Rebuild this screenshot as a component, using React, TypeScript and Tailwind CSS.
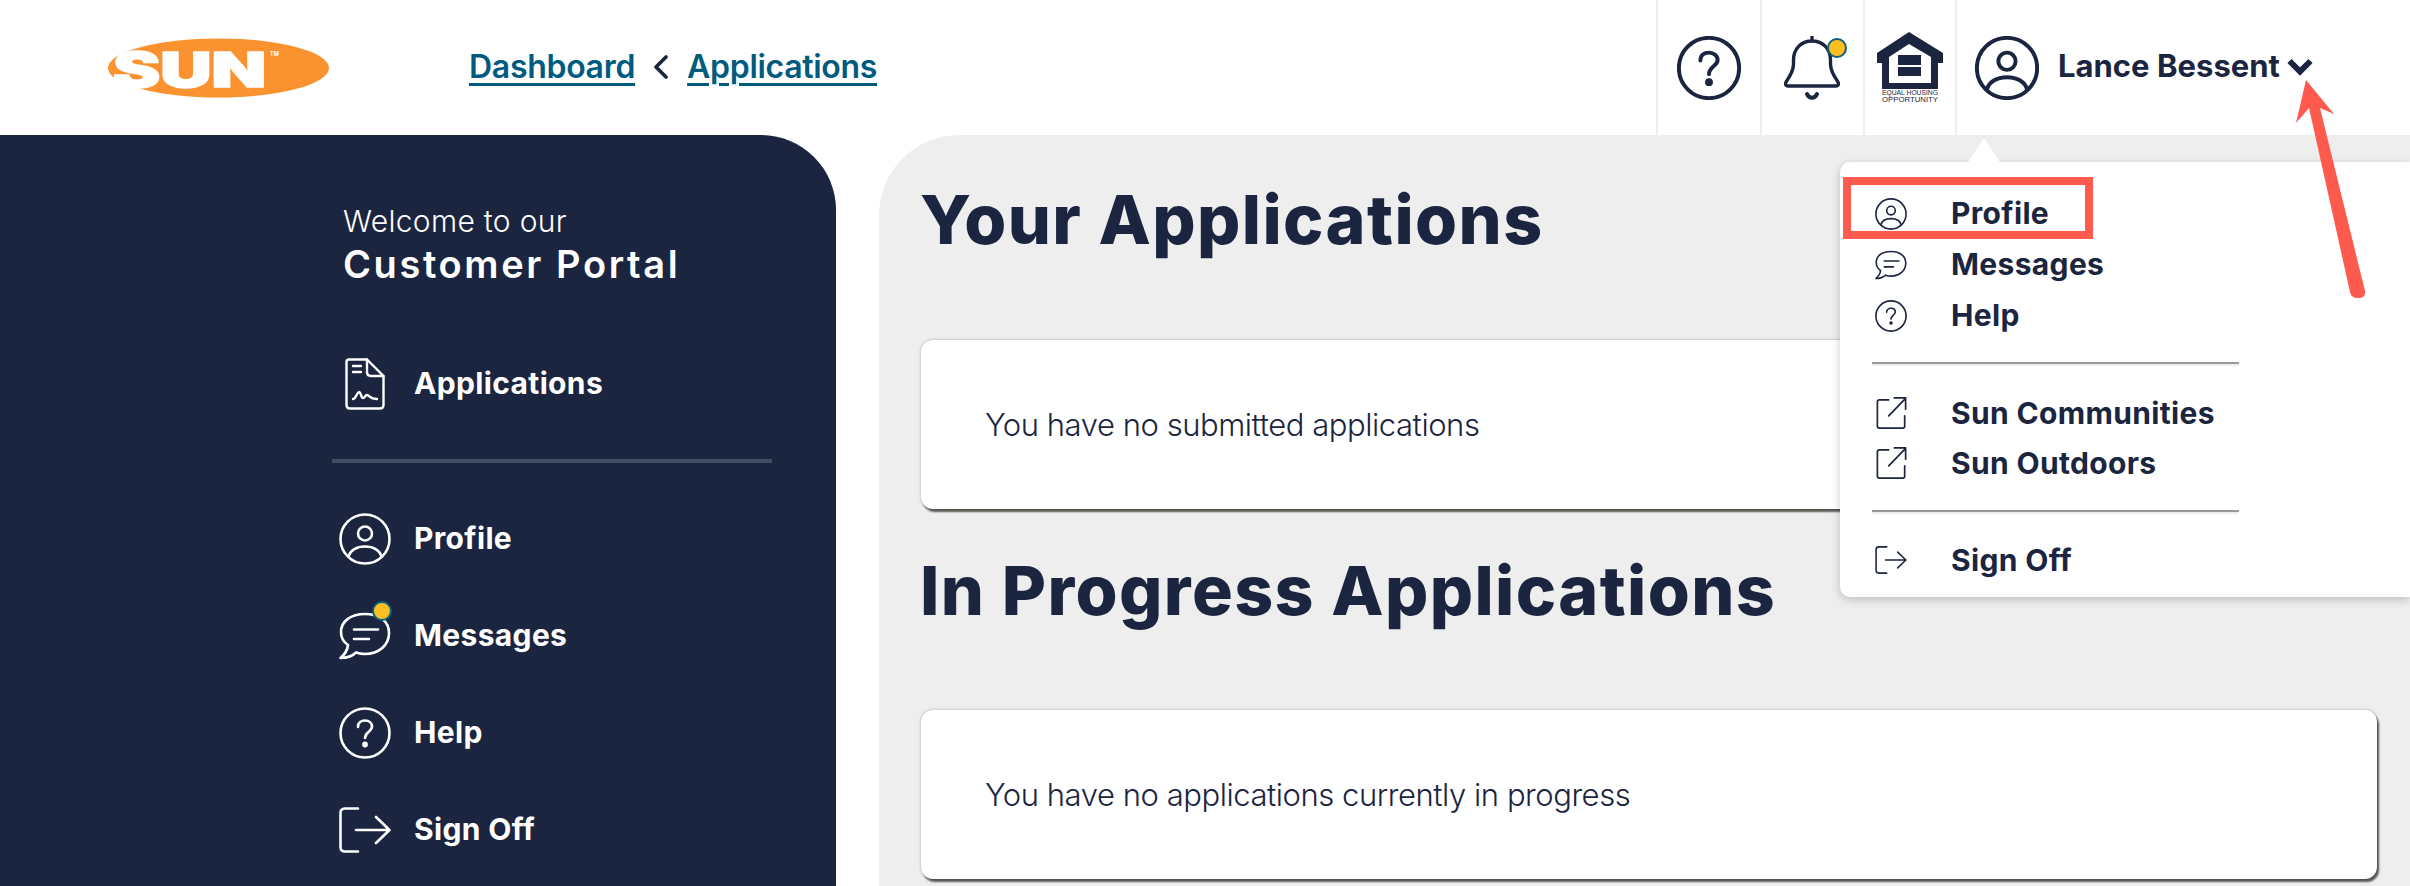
const navy = "#1b2540";

const UserIcon = ({ className = "" }: { className?: string }) => (
  <svg viewBox="0 0 52 52" fill="none" stroke="currentColor" strokeWidth="2.6" className={className}>
    <circle cx="26" cy="26" r="24.5" />
    <circle cx="26" cy="20.5" r="7" />
    <path d="M9.5 44 C11 37 18 33.5 26 33.5 S41 37 42.5 44" />
  </svg>
);

const HelpIcon = ({ className = "" }: { className?: string }) => (
  <svg viewBox="0 0 52 52" fill="none" stroke="currentColor" strokeWidth="2.6" strokeLinecap="round" className={className}>
    <circle cx="26" cy="26" r="24.5" />
    <path d="M19 20 C19 15.5 22 13.5 26 13.5 C30 13.5 33 16 33 19.5 C33 24.5 26 25 26 31" />
    <circle cx="26" cy="37.5" r="1.6" fill="currentColor" />
  </svg>
);

const ChatIcon = ({ className = "" }: { className?: string }) => (
  <svg viewBox="0 0 52 48" fill="none" stroke="currentColor" strokeWidth="2.6" strokeLinecap="round" strokeLinejoin="round" className={className}>
    <path d="M26 2 C12 2 2 9 2 20 C2 26 4.5 30 9 33 C8.5 38 5 43 1.5 46 C8 46 14 43.5 17 40.5 C20 41.5 23 42 26 42 C40 42 50 33 50 21 C50 9 40 2 26 2 Z" />
    <path d="M15 17.5 H39 M15 27 H30" />
  </svg>
);

const ExternalIcon = ({ className = "" }: { className?: string }) => (
  <svg viewBox="0 0 32 34" fill="none" stroke="currentColor" strokeWidth="1.8" strokeLinecap="round" strokeLinejoin="round" className={className}>
    <path d="M13 3 H3 C1.8 3 1 3.8 1 5 V31 C1 32.2 1.8 33 3 33 H28 C29.2 33 30 32.2 30 31 V20" />
    <path d="M13 20 L31 1.5 M19 1 H31 V13" />
  </svg>
);

const SignOffIcon = ({ className = "" }: { className?: string }) => (
  <svg viewBox="0 0 52 46" fill="none" stroke="currentColor" strokeWidth="2.6" strokeLinecap="round" strokeLinejoin="round" className={className}>
    <path d="M19 1.5 H6 C3 1.5 1.5 3 1.5 6 V40 C1.5 43 3 44.5 6 44.5 H19" />
    <path d="M17 23 H50 M37 10 L50.5 23 L37 36" />
  </svg>
);

const DocIcon = () => (
  <svg viewBox="0 0 40 52" fill="none" stroke="currentColor" strokeWidth="2.4" strokeLinecap="round" strokeLinejoin="round" className="h-[52px] w-[40px] text-white">
    <path d="M4 1.5 H22 L38.5 18 V47 C38.5 49.5 37 50.5 35 50.5 H5 C3 50.5 1.5 49.5 1.5 47 V4 C1.5 2.5 2.5 1.5 4 1.5 Z" />
    <path d="M22 1.5 V14 C22 16.5 23.5 18 26 18 H38.5" />
    <path d="M8 8 H16 M8 14 H16" />
    <path d="M8 41 C11 41 12 34 14 34 C16 34 16 40 18 40 C20 40 20 37 22 37 C24 37 25 41 32 41" />
  </svg>
);

const Dot = ({ className }: { className: string }) => (
  <span className={`absolute h-[20px] w-[20px] rounded-full border-2 border-[#0b5f80] bg-[#fdbf22] ${className}`} />
);

const SunLogo = () => (
  <svg viewBox="0 0 221 60" className="h-[60px] w-[221px]">
    <ellipse cx="110.5" cy="30" rx="110.5" ry="29.5" fill="#fb9230" />
    <text x="5" y="49" fontSize="48" fontWeight="900" fontFamily="Inter, sans-serif" fill="#fff" stroke="#fff" strokeWidth="1.5" textLength="153" lengthAdjust="spacingAndGlyphs">SUN</text>
    <text x="162" y="18" fontSize="5.5" fontWeight="700" fontFamily="Inter, sans-serif" fill="#fff">TM</text>
  </svg>
);

const HousingLogo = () => (
  <svg viewBox="0 0 66 71" className="h-[71px] w-[66px]">
    <path d="M32 0 L66 21 V31 H61 V57 H5 V31 H0 V21 Z" fill={navy} />
    <path d="M32 12 L54 25 V51 H12 V25 Z" fill="#fff" />
    <path d="M21 23 H44 V33 H21 Z M21 35 H44 V44 H21 Z" fill={navy} />
    <text x="5" y="63" fontSize="6.4" fontFamily="'Liberation Sans', sans-serif" fill={navy} textLength="56" lengthAdjust="spacingAndGlyphs">EQUAL HOUSING</text>
    <text x="5" y="70" fontSize="6.4" fontFamily="'Liberation Sans', sans-serif" fill={navy} textLength="56" lengthAdjust="spacingAndGlyphs">OPPORTUNITY</text>
  </svg>
);

const Header = () => (
  <header className="flex h-[135px] items-center bg-white text-[#1b2540]">
    <div className="ml-[108px]">
      <SunLogo />
    </div>
    <nav className="mb-[2px] ml-[140px] flex items-center text-[32px] font-semibold tracking-[-0.3px] text-[#005b7f]">
      <a className="underline underline-offset-[5px] decoration-[3px]">Dashboard</a>
      <svg viewBox="0 0 16 24" fill="none" stroke={navy} strokeWidth="3.6" strokeLinecap="round" strokeLinejoin="round" className="mx-[18px] h-[24px] w-[16px]">
        <path d="M13 2 L3 12 L13 22" />
      </svg>
      <a className="underline underline-offset-[5px] decoration-[3px]">Applications</a>
    </nav>
    <div className="ml-auto flex h-full">
      <div className="flex w-[104px] items-center justify-center border-l-2 border-[#eeeeee]">
        <HelpIcon className="h-[64px] w-[64px] stroke-[3.2]" />
      </div>
      <div className="flex w-[103px] items-center justify-center border-l-2 border-[#eeeeee]">
        <div className="relative h-[64px] w-[56px]">
          <svg viewBox="0 0 56 64" fill="none" stroke="currentColor" strokeWidth="3.4" strokeLinecap="round" strokeLinejoin="round" className="h-[64px] w-[56px]">
            <path d="M28 1 V5 M28 5 C17 5 9.5 13 9.5 24 V28 C9.5 36 5 41 2 46 C1 49 2 50 5 50 H51 C54 50 55 49 54 46 C51 41 46.5 36 46.5 28 V24 C46.5 13 39 5 28 5 Z" />
            <path d="M23 58 C25 63 31 63 33 58" strokeWidth="4" />
          </svg>
          <Dot className="left-[43px] top-[2px]" />
        </div>
      </div>
      <div className="flex w-[92px] items-center justify-center border-l-2 border-[#eeeeee]">
        <HousingLogo />
      </div>
      <div className="flex items-center border-l-2 border-[#eeeeee] pl-[18px] pr-[97px]">
        <UserIcon className="h-[64px] w-[64px] stroke-[3.2]" />
        <span className="mb-[2px] ml-[19px] text-[31px] font-bold tracking-[0.03px]">Lance Bessent</span>
        <svg viewBox="0 0 26 18" fill="none" stroke="currentColor" strokeWidth="6" className="mb-[2px] ml-[7px] h-[18px] w-[26px]">
          <path d="M2.5 3 L13 13.5 L23.5 3" />
        </svg>
      </div>
    </div>
  </header>
);

const SideRow = ({ icon, label }: { icon: React.ReactNode; label: string }) => (
  <div className="flex h-[97px] items-center">
    <div className="flex w-[66px] justify-center">{icon}</div>
    <span className="ml-[16px] text-[30px] font-bold tracking-[0.35px] text-white">{label}</span>
  </div>
);

const Sidebar = () => (
  <aside className="w-[836px] shrink-0 rounded-tr-[75px] bg-[#1b2540] pl-[332px] pr-[64px]">
    <div className="pl-[11px] pt-[65px] text-white">
      <p className="h-[42px] text-[30px] font-light leading-[42px] tracking-[0.3px]">Welcome to our</p>
      <p className="h-[44px] text-[38px] font-semibold leading-[44px] tracking-[2.6px]">Customer Portal</p>
    </div>
    <div className="mt-[49px]">
      <SideRow icon={<DocIcon />} label="Applications" />
    </div>
    <div className="mt-[27px] h-[4px] bg-[#414c63]" />
    <div className="mt-[27px]">
      <SideRow icon={<UserIcon className="h-[52px] w-[52px] text-white" />} label="Profile" />
      <SideRow
        icon={
          <div className="relative">
            <ChatIcon className="h-[48px] w-[52px] text-white" />
            <Dot className="left-[33px] top-[-11px]" />
          </div>
        }
        label="Messages"
      />
      <SideRow icon={<HelpIcon className="h-[52px] w-[52px] text-white" />} label="Help" />
      <SideRow icon={<SignOffIcon className="h-[46px] w-[52px] text-white" />} label="Sign Off" />
    </div>
  </aside>
);

const Card = ({ text }: { text: string }) => (
  <div className="flex h-[169px] items-center rounded-[12px] bg-white pl-[64px] text-[31px] font-light tracking-[-0.45px] text-[#1b2540] shadow-[0_0_3px_rgba(0,0,0,0.3),2px_3px_2px_rgba(70,65,60,0.85)]">
    <span className="mt-[2px]">{text}</span>
  </div>
);

const Main = () => (
  <main className="ml-[43px] flex-1 rounded-tl-[80px] bg-[#eeeeee] pl-[42px] pr-[33px] pt-[44px] text-[#1b2540]">
    <h1 className="mb-[81px] ml-[-1px] h-[80px] text-[68px] font-extrabold leading-[80px] tracking-[1.4px]">Your Applications</h1>
    <Card text="You have no submitted applications" />
    <h1 className="mb-[80px] ml-[-1px] mt-[41px] h-[80px] text-[68px] font-extrabold leading-[80px] tracking-[1.4px]">In Progress Applications</h1>
    <Card text="You have no applications currently in progress" />
  </main>
);

const MenuRow = ({ icon, label, className = "" }: { icon: React.ReactNode; label: string; className?: string }) => (
  <div className={`flex items-center ${className}`}>
    <div className="flex w-[32px] justify-center">{icon}</div>
    <span className="ml-[44px] text-[30px] font-bold tracking-[0.35px]">{label}</span>
  </div>
);

const MenuDivider = ({ className }: { className: string }) => (
  <div className={`ml-[-3px] h-[2px] w-[367px] bg-[#999999] shadow-[0_2px_0_#eeeeee] ${className}`} />
);

const ProfileMenu = () => (
  <div className="absolute left-[1840px] right-0 top-[162px] h-[435px] rounded-l-[10px] bg-white pl-[35px] pt-[26px] text-[#1b2540] shadow-[0_3px_10px_rgba(0,0,0,0.2)]">
    <div className="absolute left-[128px] top-[-24px] h-0 w-0 border-x-[16px] border-b-[24px] border-x-transparent border-b-white" />
    <MenuRow className="h-[51px]" icon={<UserIcon className="h-[32px] w-[32px]" />} label="Profile" />
    <MenuRow className="h-[51px]" icon={<ChatIcon className="h-[30px] w-[32px]" />} label="Messages" />
    <MenuRow className="h-[51px]" icon={<HelpIcon className="h-[32px] w-[32px]" />} label="Help" />
    <MenuDivider className="mt-[21px]" />
    <MenuRow className="mt-[24px] h-[50px]" icon={<ExternalIcon className="h-[32px] w-[31px]" />} label="Sun Communities" />
    <MenuRow className="h-[50px]" icon={<ExternalIcon className="h-[32px] w-[31px]" />} label="Sun Outdoors" />
    <MenuDivider className="mt-[22px]" />
    <MenuRow className="mt-[23px] h-[50px]" icon={<SignOffIcon className="h-[28px] w-[32px]" />} label="Sign Off" />
  </div>
);

// red annotations drawn over the screenshot
const Annotations = () => (
  <>
    <div className="absolute left-[1843px] top-[177px] h-[62px] w-[250px] border-8 border-[#ff5a4e]" />
    <svg viewBox="2280 70 100 240" className="absolute left-[2280px] top-[70px] h-[240px] w-[100px]">
      <path d="M2306 80 L2334 114 L2320 108 L2365 291 Q2366 298 2358 298 Q2351 298 2350 292 L2309 108 L2296 123 Z" fill="#ff5a4e" />
    </svg>
  </>
);

export default function App() {
  return (
    <div className="relative h-[886px] w-[2410px] overflow-hidden bg-white font-['Inter',sans-serif]">
      <Header />
      <div className="flex h-[751px]">
        <Sidebar />
        <Main />
      </div>
      <ProfileMenu />
      <Annotations />
    </div>
  );
}
